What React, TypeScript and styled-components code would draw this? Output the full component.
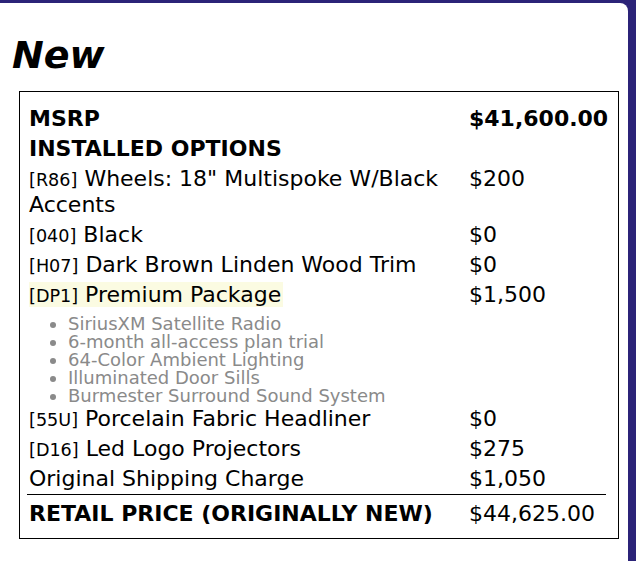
import React from "react";
import styled, { createGlobalStyle } from "styled-components";

const Global = createGlobalStyle`
  html, body { margin: 0; padding: 0; }
  body {
    background: #2b2378;
    font-family: "DejaVu Sans", Verdana, sans-serif;
    color: #000;
    overflow: hidden;
  }
`;

const Card = styled.div`
  margin: 3px 0 0 -10px;
  width: 638px;
  height: 570px;
  background: #fff;
  border-top-right-radius: 8px;
  padding: 31px 0 0 22px;
  box-sizing: border-box;
`;

const Title = styled.h2`
  margin: 0 0 15px 0;
  font-size: 38px;
  line-height: 42px;
  font-weight: bold;
  font-style: italic;
`;

const Box = styled.div`
  margin-left: 7px;
  width: 600px;
  box-sizing: border-box;
  border: 1px solid #000;
  padding: 12px 12px 9px 7px;
`;

const Table = styled.table`
  width: 100%;
  table-layout: fixed;
  border-collapse: collapse;
  font-size: 22px;
  line-height: 26px;
`;

const LabelCol = styled.col`
  width: 440px;
`;

const Label = styled.td<{ $bold?: boolean }>`
  padding: 2px 2px;
  vertical-align: top;
  font-weight: ${(p) => (p.$bold ? "bold" : "normal")};
`;

const Price = styled.td<{ $bold?: boolean }>`
  padding: 2px 2px;
  vertical-align: top;
  white-space: nowrap;
  font-weight: ${(p) => (p.$bold ? "bold" : "normal")};
`;

const FeatureCell = styled.td`
  padding: 5px 2px 0 2px;
  vertical-align: top;
`;

const TotalRow = styled.tr`
  border-top: 1px solid #000;
  & > td { padding-top: 6px; }
`;

const Code = styled.span`
  font-size: 0.8em;
  line-height: 1;
`;

const Highlight = styled.span`
  background: #fbfbe2;
  padding: 0 2px 0 0;
`;

const Features = styled.ul`
  margin: 0 0 -1px 0;
  padding-left: 39px;
  font-size: 18px;
  line-height: 18px;
  color: #8a8a8a;
  list-style: disc;
`;

type Opt = { code: string; name: string; price: string; highlight?: boolean; features?: string[] };

const options: Opt[] = [
  { code: "R86", name: 'Wheels: 18" Multispoke W/Black Accents', price: "$200" },
  { code: "040", name: "Black", price: "$0" },
  { code: "H07", name: "Dark Brown Linden Wood Trim", price: "$0" },
  {
    code: "DP1",
    name: "Premium Package",
    price: "$1,500",
    highlight: true,
    features: [
      "SiriusXM Satellite Radio",
      "6-month all-access plan trial",
      "64-Color Ambient Lighting",
      "Illuminated Door Sills",
      "Burmester Surround Sound System",
    ],
  },
  { code: "55U", name: "Porcelain Fabric Headliner", price: "$0" },
  { code: "D16", name: "Led Logo Projectors", price: "$275" },
];

export default function App() {
  return (
    <>
      <Global />
      <Card>
        <Title>New</Title>
        <Box>
          <Table>
            <colgroup>
              <LabelCol />
              <col />
            </colgroup>
            <tbody>
              <tr>
                <Label $bold>MSRP</Label>
                <Price $bold>$41,600.00</Price>
              </tr>
              <tr>
                <Label $bold>INSTALLED OPTIONS</Label>
                <Price />
              </tr>
              {options.map((o) => {
                const content = (
                  <>
                    <Code>[{o.code}]</Code> {o.name}
                  </>
                );
                return (
                  <React.Fragment key={o.code}>
                    <tr>
                      <Label>{o.highlight ? <Highlight>{content}</Highlight> : content}</Label>
                      <Price>{o.price}</Price>
                    </tr>
                    {o.features && (
                      <tr>
                        <FeatureCell>
                          <Features>
                            {o.features.map((f) => (
                              <li key={f}>{f}</li>
                            ))}
                          </Features>
                        </FeatureCell>
                        <FeatureCell />
                      </tr>
                    )}
                  </React.Fragment>
                );
              })}
              <tr>
                <Label>Original Shipping Charge</Label>
                <Price>$1,050</Price>
              </tr>
              <TotalRow>
                <Label $bold>RETAIL PRICE (ORIGINALLY NEW)</Label>
                <Price>$44,625.00</Price>
              </TotalRow>
            </tbody>
          </Table>
        </Box>
      </Card>
    </>
  );
}
